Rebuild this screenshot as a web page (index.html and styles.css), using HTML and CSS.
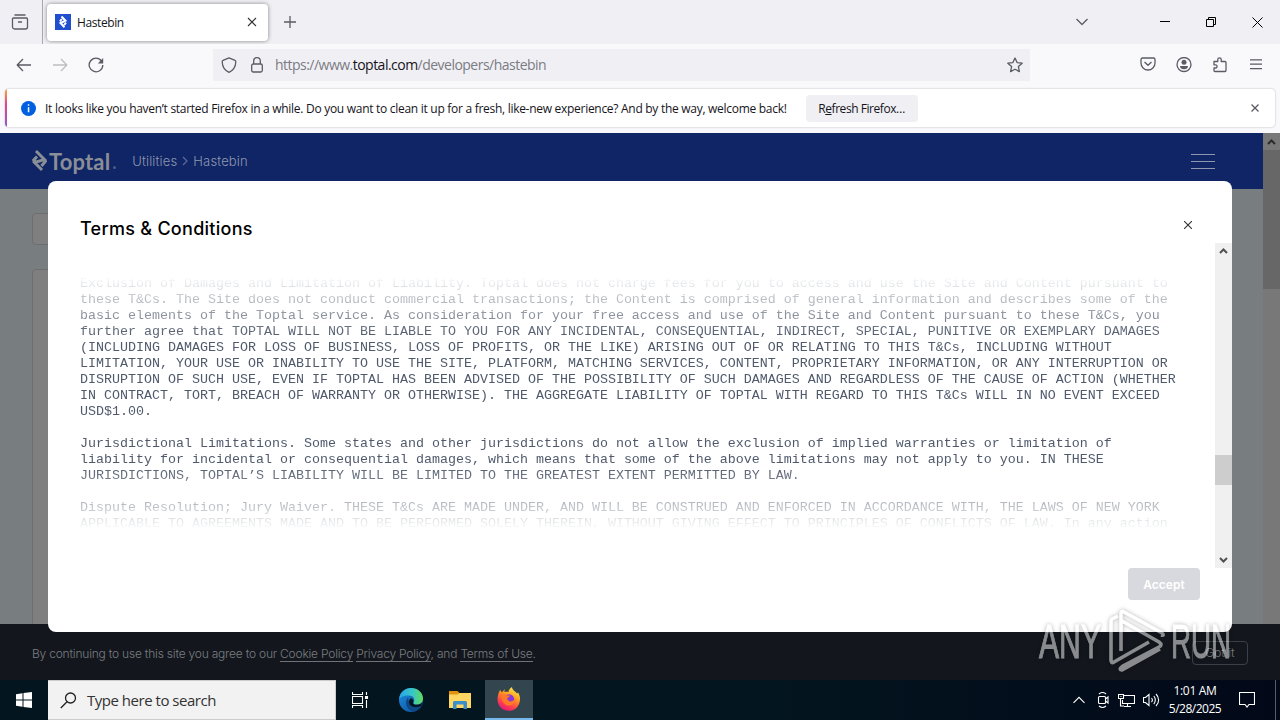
FILE: index.html
```html
<!DOCTYPE html>
<html lang="en">

<head>
    <meta charset="UTF-8">
    <meta name="viewport" content="width=device-width, initial-scale=1.0">
    <title>Hastebin</title>
    <link rel="stylesheet" href="styles.css">
</head>

<body>
    <div class="desktop">
        <!-- tabs -->
        <div class="tabbar">
            <div class="tab-view">
                <svg width="18" height="18" viewBox="0 0 18 18" class="line"><path d="M3.500 2h11M2.500 5h13a1 1 0 0 1 1 1v8a2 2 0 0 1-2 2h-11a2 2 0 0 1-2-2V6a1 1 0 0 1 1-1zM7 9h4"/></svg>
            </div>
            <div class="tab">
                <svg width="16" height="16" viewBox="0 0 16 16"><path fill="#204ecf" d="M0 0h16v16H0z"/><path fill="none" stroke="#fff" stroke-width="2" d="M6.500 2.500l4 4.200-5 2.300 4 4.300M6.800 5L5 7.300M9.200 11l1.800-2.300"/></svg>
                <span class="tab-title">Hastebin</span>
                <svg width="10" height="10" viewBox="0 0 10 10" class="line dark"><path d="M1 1l8 8M9 1L1 9"/></svg>
            </div>
            <svg width="12" height="12" viewBox="0 0 12 12" class="line plus"><path d="M6 0v12M0 6h12"/></svg>
            <div class="window-buttons">
                <svg width="12" height="8" viewBox="0 0 12 8" class="line"><path d="M.5 1L6 6.500 11.500 1"/></svg>
                <svg width="10" height="10" viewBox="0 0 10 10" class="line black"><path d="M0 4.500h10"/></svg>
                <svg width="10" height="10" viewBox="0 0 10 10" class="line black"><path d="M.5 2.500h7v7h-7zM2.500 2.500v-2h7v7h-2"/></svg>
                <svg width="11" height="11" viewBox="0 0 11 11" class="line black"><path d="M.5.500l10 10M10.500.500l-10 10"/></svg>
            </div>
        </div>

        <!-- address bar -->
        <div class="navbar">
            <div class="nav-buttons">
                <svg width="16" height="16" viewBox="0 0 16 16" class="line"><path d="M15 8H1.500M7 2L1.200 8 7 14"/></svg>
                <svg width="16" height="16" viewBox="0 0 16 16" class="line off"><path d="M1 8h13.500M9 2l5.800 6L9 14"/></svg>
                <svg width="16" height="16" viewBox="0 0 16 16" class="line"><path d="M13.500 4A6.800 6.800 0 1 0 14.800 8"/><path class="solid" d="M15.200 1v5.500H9.800z"/></svg>
            </div>
            <div class="urlbar">
                <svg width="16" height="16" viewBox="0 0 16 16" class="line"><path d="M8 .8l6 2.500c.8.300.8 1 .8 1.700-.2 5-2.800 8.500-6.800 10.300C4 13.500 1.400 10 1.200 5c0-.7 0-1.400.8-1.700z"/></svg>
                <svg width="12" height="16" viewBox="0 0 12 16" class="line"><rect x=".7" y="7" width="10.600" height="8" rx="1.500"/><path d="M2.700 7V4a3.300 3.300 0 0 1 6.600 0v3"/></svg>
                <div class="url">https://www.<b>toptal.com</b>/developers/hastebin</div>
                <svg width="16" height="16" viewBox="0 0 16 16" class="line"><path d="M8 1l2.100 4.600 5.100.6-3.800 3.400 1 5L8 12.200 3.600 14.600l1-5L.8 6.200l5.100-.6z"/></svg>
            </div>
            <div class="nav-tools">
                <svg width="16" height="16" viewBox="0 0 16 16" class="line"><path d="M2.500 1h11A1.500 1.500 0 0 1 15 2.500V6A7 7 0 0 1 1 6V2.500A1.500 1.500 0 0 1 2.500 1zM4.500 5L8 8.300 11.500 5"/></svg>
                <svg width="16" height="16" viewBox="0 0 16 16" class="line"><circle cx="8" cy="7.500" r="7"/><circle cx="8" cy="5.300" r="2.500" class="solid"/><path class="solid" d="M4 9h8c0 2-1.500 3.300-4 3.300S4 11 4 9z"/></svg>
                <svg width="16" height="16" viewBox="0 0 16 16" class="line"><path d="M2 4.500h3.800v-2a1.700 1.700 0 0 1 3.400 0v2H13a1 1 0 0 1 1 1v8a1 1 0 0 1-1 1H3a1 1 0 0 1-1-1V11h1.500a1.600 1.600 0 0 0 0-3.200H2z"/></svg>
                <svg width="12" height="12" viewBox="0 0 12 12" class="line"><path d="M0 .8h12M0 5.200h12M0 9.700h12"/></svg>
            </div>
        </div>

        <!-- refresh message -->
        <div class="notice-wrap">
            <div class="notice">
                <svg width="15" height="15" viewBox="0 0 15 15"><circle cx="7.500" cy="7.500" r="7.500" fill="#0060df"/><path fill="#fff" d="M6.800 3.300h1.500v1.500H6.800zM6.800 6.200h1.500v5H6.800z"/></svg>
                <span class="notice-text">It looks like you haven’t started Firefox in a while. Do you want to clean it up for a fresh, like-new experience? And by the way, welcome back!</span>
                <div class="refresh">R<u>e</u>fresh Firefox…</div>
                <svg width="8" height="8" viewBox="0 0 8 8" class="line"><path d="M.5.500l7 7M7.500.500l-7 7"/></svg>
            </div>
        </div>

        <!-- page -->
        <div class="viewport">
            <div class="page">
                <div class="header">
                    <svg width="15" height="24" viewBox="0 0 15 24" class="logo-mark"><path d="M4 2l8.500 8.500-10 3L10 21M5 7.500L1.800 11l3 3M9.500 17l3.800-4.500-3-3"/></svg>
                    <span class="logo">Toptal</span><span class="logo-dot"></span>
                    <span class="crumb">Utilities</span>
                    <svg width="6" height="10" viewBox="0 0 6 10" class="crumb-arrow"><path d="M1 1l4 4-4 4"/></svg>
                    <span class="crumb">Hastebin</span>
                    <svg width="24" height="16" viewBox="0 0 24 16" class="burger"><path d="M0 1.500h24M0 8.500h24M0 15.500h24"/></svg>
                </div>
                <div class="main">
                    <div class="box small"></div>
                    <div class="box editor"></div>
                </div>
            </div>
            <div class="page-scroll">
                <svg width="9" height="6" viewBox="0 0 9 6"><path d="M1 5l3.500-3.500L8 5"/></svg>
                <div class="page-thumb"></div>
            </div>

            <div class="cookies">
                <div class="cookies-text">By continuing to use this site you agree to our <span>Cookie Policy</span> <span>Privacy Policy</span>, and <span>Terms of Use</span>.</div>
                <div class="got-it">Got it</div>
            </div>

            <div class="modal">
                <div class="modal-head">
                    <div class="modal-title">Terms &amp; Conditions</div>
                    <svg width="8" height="8" viewBox="0 0 8 8" class="line dark"><path d="M0 0l8 8M8 0L0 8"/></svg>
                </div>
                <div class="modal-body">
                    <pre class="terms">Exclusion of Damages and Limitation of Liability. Toptal does not charge fees for you to access and use the Site and Content pursuant to
these T&amp;Cs. The Site does not conduct commercial transactions; the Content is comprised of general information and describes some of the
basic elements of the Toptal service. As consideration for your free access and use of the Site and Content pursuant to these T&amp;Cs, you
further agree that TOPTAL WILL NOT BE LIABLE TO YOU FOR ANY INCIDENTAL, CONSEQUENTIAL, INDIRECT, SPECIAL, PUNITIVE OR EXEMPLARY DAMAGES
(INCLUDING DAMAGES FOR LOSS OF BUSINESS, LOSS OF PROFITS, OR THE LIKE) ARISING OUT OF OR RELATING TO THIS T&amp;Cs, INCLUDING WITHOUT
LIMITATION, YOUR USE OR INABILITY TO USE THE SITE, PLATFORM, MATCHING SERVICES, CONTENT, PROPRIETARY INFORMATION, OR ANY INTERRUPTION OR
DISRUPTION OF SUCH USE, EVEN IF TOPTAL HAS BEEN ADVISED OF THE POSSIBILITY OF SUCH DAMAGES AND REGARDLESS OF THE CAUSE OF ACTION (WHETHER
IN CONTRACT, TORT, BREACH OF WARRANTY OR OTHERWISE). THE AGGREGATE LIABILITY OF TOPTAL WITH REGARD TO THIS T&amp;Cs WILL IN NO EVENT EXCEED
USD$1.00.

Jurisdictional Limitations. Some states and other jurisdictions do not allow the exclusion of implied warranties or limitation of
liability for incidental or consequential damages, which means that some of the above limitations may not apply to you. IN THESE
JURISDICTIONS, TOPTAL’S LIABILITY WILL BE LIMITED TO THE GREATEST EXTENT PERMITTED BY LAW.

Dispute Resolution; Jury Waiver. THESE T&amp;Cs ARE MADE UNDER, AND WILL BE CONSTRUED AND ENFORCED IN ACCORDANCE WITH, THE LAWS OF NEW YORK
APPLICABLE TO AGREEMENTS MADE AND TO BE PERFORMED SOLELY THEREIN, WITHOUT GIVING EFFECT TO PRINCIPLES OF CONFLICTS OF LAW. In any action</pre>
                    <div class="scroll">
                        <svg width="9" height="6" viewBox="0 0 9 6"><path d="M1 5l3.500-3.500L8 5"/></svg>
                        <div class="thumb"></div>
                        <svg width="9" height="6" viewBox="0 0 9 6"><path d="M1 1l3.500 3.500L8 1"/></svg>
                    </div>
                </div>
                <div class="modal-foot">
                    <div class="accept">Accept</div>
                </div>
            </div>
        </div>

        <!-- taskbar -->
        <div class="taskbar">
            <div class="start">
                <svg width="16" height="16" viewBox="0 0 16 16"><path fill="#fff" d="M0 2.200l6.500-.9v6.200H0zM7.500 1.100L16 0v7.500H7.500zM0 8.500h6.500v6.200L0 13.800zM7.500 8.500H16V16l-8.500-1.100z"/></svg>
            </div>
            <div class="search">
                <svg width="17" height="17" viewBox="0 0 17 17"><circle cx="10.500" cy="6" r="5"/><path d="M7 9.700L.8 16"/></svg>
                <span>Type here to search</span>
            </div>
            <div class="task">
                <svg width="17" height="16" viewBox="0 0 17 16" class="white"><path d="M.5 0v2.500h10V0M.5 16v-2.500h10V16M.5 4.500h10v7H.5zM14.500 0v3M14.500 8v8"/><path fill="#fff" d="M13.500 4.500h2v2h-2z"/></svg>
            </div>
            <div class="task edge">
                <svg width="24" height="24" viewBox="0 0 24 24">
                    <defs>
                        <linearGradient id="edgeTop" x1="0" y1="0.500" x2="1" y2="0.500"><stop offset="0" stop-color="#2aa6e8"/><stop offset=".55" stop-color="#36c6c8"/><stop offset="1" stop-color="#62dc58"/></linearGradient>
                        <linearGradient id="edgeLow" x1="0" y1="0" x2="1" y2="1"><stop offset="0" stop-color="#1b8fe0"/><stop offset="1" stop-color="#114a93"/></linearGradient>
                    </defs>
                    <circle cx="12" cy="12" r="12" fill="url(#edgeLow)"/>
                    <path fill="url(#edgeTop)" d="M.2 11C1 4 6 0 12 0c7 0 12 5 12 10.500 0 4-3 6-6 6-2.500 0-4-1-3.800-1.800C16 13 16 8 10.500 7.500 5 7 1 9.500.2 11z"/>
                    <path fill="#0c4788" d="M9 9.500C4.500 15 8 22.500 15 23.600c3-.8 5.500-3 7-5.200-6 2.800-12.500 1-12-4.500z"/>
                    <path fill="#03151f" d="M11.800 10.200c2 .3 3.400 2.500 2.400 4.500-.5 1.300 1.500 2.200 4 2 2.300-.2 4-1 5-2.500-.3 1.800-.8 3-1.500 4-5 2.500-12 .8-11.700-4.500.1-1.500.8-2.600 1.800-3.500z"/>
                </svg>
            </div>
            <div class="task folder">
                <svg width="22" height="18" viewBox="0 0 22 18"><path fill="#e2920c" d="M0 0h8.500l2 2H22v4H0z"/><path fill="#ffd762" d="M0 3.500h8.500L10.500 2H22v15H0z"/><path fill="#3a8ec9" d="M4 18v-6.500a1.500 1.500 0 0 1 1.500-1.500h11a1.500 1.500 0 0 1 1.500 1.500V18h-3.500v-4.500h-7V18z"/></svg>
            </div>
            <div class="task open">
                <svg width="24" height="24" viewBox="0 0 24 24">
                    <defs>
                        <linearGradient id="fox" x1=".8" y1="0" x2=".3" y2="1"><stop offset="0" stop-color="#fff44f"/><stop offset=".4" stop-color="#ff9a1f"/><stop offset=".75" stop-color="#ff3c50"/><stop offset="1" stop-color="#e3167c"/></linearGradient>
                    </defs>
                    <path fill="url(#fox)" d="M1.500 6.500C2 4 3.500 3 3.500 3l.8 2L6 4.500 7.500 2v3c1.500-.5 3-.3 4 0C11.500 3 13 1 15 0c0 3 3.500 4.500 5 6.500l1-1c2.500 3.500 2.500 8 1 11.500a11.200 11.200 0 0 1-20.800-.5C0 13 .5 9.500 1.500 6.500z"/>
                    <circle cx="12" cy="12.500" r="5.200" fill="#8a38d8"/>
                    <path fill="#ff7a26" d="M4.500 8c2-1.500 4-.8 5.500.5h3c0 1.500-2.500 2-3 2.800 1 3.500 4.500 4.200 7.500 1.200.5 4-3 6.500-6.500 6S4 14 4.500 8z"/>
                </svg>
            </div>
            <div class="tray">
                <svg width="12" height="8" viewBox="0 0 12 8" class="white"><path d="M.5 6.800L6 1.300l5.500 5.500"/></svg>
                <svg width="13" height="16" viewBox="0 0 13 16" class="white"><rect x="1.500" y="4.500" width="7" height="7" rx="1"/><path d="M8.500 7l2.500-2v6L8.500 9M2 2c2-1.700 5-1.700 7 0M2 14c2 1.700 5 1.700 7 0"/></svg>
                <svg width="17" height="15" viewBox="0 0 17 15" class="white"><path d="M6 2.500h10.500v8H4.500V7M9.500 10.500v3M6 13.500h7M.5 1.500h5v4h-5zM2.500 5.500v7.500H6M2.500 3.500h1"/></svg>
                <svg width="17" height="14" viewBox="0 0 17 14" class="white"><path d="M.5 4.500h2L6 1.500v11l-3.500-3h-2zM8.500 5c1 1.200 1 3 0 4M10.800 3c2 2.200 2 6 0 8M13 1c3.500 3.500 3.500 8.500 0 12"/></svg>
                <div class="clock">
                    <div class="time">1:01 AM</div>
                    <div class="date">5/28/2025</div>
                </div>
                <svg width="16" height="16" viewBox="0 0 16 16" class="white"><path d="M.5.500h15v12H10L8 15l-2-2.500H.5z"/></svg>
                <div class="show-desktop"></div>
            </div>
        </div>
    </div>

    <svg class="watermark" width="210" height="70" viewBox="0 0 210 70">
        <text x="4" y="54" textLength="62" lengthAdjust="spacingAndGlyphs">ANY</text>
        <path d="M83 12l-5 2.500q-2 1-2 3V56q0 4 3 2l35-20M86 47V10q0-4 3-2l38 21q3 3-1 2M87 17l37 21q4 3 0 5L88 62q-5 4-1 4l38-21"/>
        <text x="136" y="54" textLength="60" lengthAdjust="spacingAndGlyphs">RUN</text>
    </svg>
</body>

</html>
```
FILE: styles.css
```css
* {
    box-sizing: border-box;
}

body {
    margin: 0;
    overflow: hidden;
    font-family: "Open Sans", "Noto Sans", sans-serif;
    font-size: 12px;
    color: #15141a;
}

svg {
    flex: none;
    display: block;
}

.desktop {
    width: 1280px;
    height: 720px;
    display: flex;
    flex-direction: column;
    white-space: nowrap;
}

.line {
    fill: none;
    stroke: #5b5b66;
    stroke-width: 1.3;
    stroke-linejoin: round;
}

.line.dark {
    stroke: #333;
    stroke-width: 1.1;
}

.line.black {
    stroke: #000;
    stroke-width: 1;
}

.line.off {
    stroke: #bdbdc3;
}

.line .solid {
    fill: #5b5b66;
    stroke: none;
}

.white {
    fill: none;
    stroke: #fff;
    stroke-width: 1.1;
}

/* tabs */
.tabbar {
    height: 44px;
    display: flex;
    align-items: center;
    background: #f0f0f4;
}

.tab-view {
    width: 43px;
    height: 44px;
    padding: 13px 0 0 11px;
    border-right: 1px solid #a9a9b0;
}

.tab {
    width: 221px;
    height: 37px;
    margin-left: 4px;
    padding: 0 11px 0 8px;
    display: flex;
    align-items: center;
    background: #fff;
    border-radius: 4px;
    box-shadow: 0 0 4px rgba(0, 0, 0, .45);
}

.tab-title {
    flex: 1;
    margin-left: 6px;
    letter-spacing: -.4px;
}

.plus {
    margin-left: 16px;
}

.window-buttons {
    margin-left: auto;
    padding-right: 17px;
    display: flex;
    align-items: center;
}

.window-buttons svg + svg {
    margin-left: 36px;
}

.window-buttons svg:nth-child(2) {
    margin-left: 72px;
}

/* address bar */
.navbar {
    height: 44px;
    padding: 0 18px 3px 16px;
    display: flex;
    align-items: center;
    background: #f9f9fb;
}

.nav-buttons {
    width: 197px;
    display: flex;
    gap: 20px;
}

.urlbar {
    width: 817px;
    height: 32px;
    padding: 0 7px 0 8px;
    display: flex;
    align-items: center;
    background: #f0f0f4;
}

.urlbar svg:nth-child(2) {
    margin-left: 14px;
}

.url {
    flex: 1;
    margin-left: 12px;
    font-size: 14px;
    letter-spacing: -.52px;
    color: #7b7b84;
}

.url b {
    font-weight: 400;
    color: #15141a;
}

.nav-tools {
    margin-left: auto;
    display: flex;
    align-items: center;
    gap: 20px;
}

.nav-tools svg:last-child {
    margin-left: 2px;
}

/* refresh message */
.notice-wrap {
    height: 45px;
    padding: 1px 5px 6px;
    background: #f9f9fb;
}

.notice {
    height: 38px;
    padding: 0 16px 0 14px;
    display: flex;
    align-items: center;
    background: linear-gradient(#ffa436, #e0458b 40%, #9059d0) left / 2px 100% no-repeat #fff;
    border-radius: 4px;
    box-shadow: 0 0 2px rgba(0, 0, 0, .3);
}

.notice svg:first-child {
    margin-left: 2px;
}

.notice-text {
    margin-left: 9px;
    letter-spacing: -.285px;
}

.refresh {
    width: 112px;
    height: 27px;
    margin: 0 auto 0 19px;
    line-height: 28px;
    text-align: center;
    letter-spacing: -.45px;
    background: #f0f0f4;
    border-radius: 4px;
}

/* page */
.viewport {
    position: relative;
    height: 547px;
    display: flex;
    overflow: hidden;
}

.page {
    flex: 1;
    background: #787d80;
}

.header {
    height: 56px;
    padding: 0 48px 0 32px;
    display: flex;
    align-items: center;
    background: #0f2566;
    color: #8f97ae;
    font-family: Inter, sans-serif;
    font-size: 13px;
}

.logo-mark {
    fill: none;
    stroke: #8a8e96;
    stroke-width: 3;
}

.logo {
    margin-left: 2px;
    font-family: Lato, sans-serif;
    font-size: 22px;
    font-weight: 700;
    letter-spacing: .15px;
    color: #8a8e96;
}

.logo-dot {
    width: 3px;
    height: 3px;
    margin: 12px 16px 0 3px;
    border-radius: 50%;
    background: #4b5a85;
}

.crumb {
    font-weight: 300;
    letter-spacing: .15px;
}

.crumb-arrow {
    margin: 0 5px 0 5px;
    fill: none;
    stroke: #5c6b98;
    stroke-width: 1.2;
}

.burger {
    margin-left: auto;
    stroke: #8f97ae;
    stroke-width: 1;
}

.main {
    padding: 24px 48px 0 32px;
}

.box {
    background: #7f7f7f;
    border: 1px solid #6c6e71;
    border-radius: 4px;
}

.small {
    height: 32px;
    width: 600px;
}

.editor {
    height: 400px;
    margin-top: 24px;
}

.page-scroll {
    width: 17px;
    padding-top: 6px;
    background: #787878;
}

.page-scroll svg {
    margin: 0 auto;
    fill: none;
    stroke: #2c2c2c;
    stroke-width: 2;
}

.page-thumb {
    height: 139px;
    margin-top: 5px;
    background: #676767;
}

.cookies {
    position: absolute;
    left: 0;
    right: 0;
    bottom: 0;
    height: 56px;
    padding: 2px 32px 0;
    display: flex;
    align-items: center;
    justify-content: space-between;
    background: #13171d;
    color: #7a7d81;
    font-family: Inter, sans-serif;
    font-size: 12px;
    font-weight: 300;
}

.cookies-text {
    letter-spacing: -.21px;
}

.cookies-text span {
    border-bottom: 1px solid #6f7276;
}

.got-it {
    width: 56px;
    height: 24px;
    line-height: 22px;
    text-align: center;
    border: 1px solid #3c3f44;
    border-radius: 4px;
}

/* terms dialog */
.modal {
    position: absolute;
    left: 48px;
    top: 48px;
    width: 1184px;
    height: 451px;
    display: flex;
    flex-direction: column;
    background: #fff;
    border-radius: 8px;
}

.modal-head {
    height: 62px;
    padding: 26px 40px 0 32px;
    display: flex;
    justify-content: space-between;
}

.modal-head svg {
    margin-top: 14px;
}

.modal-title {
    line-height: 43px;
    font-family: Inter, sans-serif;
    font-size: 18px;
    font-weight: 500;
    letter-spacing: .28px;
    color: #000;
}

.modal-body {
    height: 325px;
    padding-left: 32px;
    display: flex;
    justify-content: space-between;
}

.terms {
    height: 254px;
    margin: 33px 0 0;
    overflow: hidden;
    font: 13.333px/16px "Liberation Mono", monospace;
    color: #505a6c;
    -webkit-mask-image: linear-gradient(transparent, #000 60px, #000 190px, transparent);
    mask-image: linear-gradient(transparent, #000 60px, #000 190px, transparent);
}

.scroll {
    width: 17px;
    padding: 5px 0;
    display: flex;
    flex-direction: column;
    align-items: center;
    background: #f0f0f0;
}

.scroll svg {
    fill: none;
    stroke: #505050;
    stroke-width: 2;
}

.thumb {
    width: 17px;
    height: 30px;
    margin: 201px 0 auto;
    background: #cdcdcd;
}

.modal-foot {
    display: flex;
    justify-content: flex-end;
    padding-right: 32px;
}

.accept {
    width: 72px;
    height: 32px;
    line-height: 33px;
    text-align: center;
    background: #d8d9de;
    border-radius: 4px;
    color: #fff;
    font-family: Inter, sans-serif;
    font-size: 12px;
    font-weight: 600;
}

/* taskbar */
.taskbar {
    height: 40px;
    display: flex;
    background: linear-gradient(90deg, #03151f, #03151f 60%, #020818);
    color: #fff;
}

.start {
    width: 48px;
    display: flex;
    align-items: center;
    justify-content: center;
}

.search {
    width: 288px;
    padding-left: 12px;
    display: flex;
    align-items: center;
    gap: 10px;
    background: #f2f2f2;
    border: 1px solid #ccc;
    border-left: 0;
    color: #333;
    font-size: 15px;
    letter-spacing: -.48px;
}

.search svg {
    fill: none;
    stroke: #222;
    stroke-width: 1.3;
}

.task {
    width: 48px;
    display: flex;
    align-items: center;
    justify-content: center;
}

.task.edge {
    width: 54px;
}

.task.folder {
    width: 44px;
    margin-right: 3px;
}

.task.open {
    background: #33454f;
    border-bottom: 2px solid #76b9ed;
}

.tray {
    margin-left: auto;
    display: flex;
    align-items: center;
}

.tray svg {
    margin-right: 8px;
}

.tray svg:first-child {
    margin-right: 12px;
}

.clock {
    width: 72px;
    line-height: 18px;
    text-align: center;
    letter-spacing: -.5px;
}

.tray .clock {
    margin-left: -9px;
}

.time {
    letter-spacing: -.3px;
}

.tray .clock + svg {
    margin: 0 20px 0 8px;
}

.show-desktop {
    width: 5px;
    height: 40px;
    border-left: 1px solid #56606c;
}

.watermark {
    position: absolute;
    left: 1035px;
    top: 604px;
    opacity: .5;
    fill: none;
    stroke: #fff;
    stroke-width: 3.6;
    filter: drop-shadow(0 0 2px rgba(0, 0, 0, .6));
}

.watermark text {
    fill: #fff;
    stroke: #fff;
    stroke-width: 1;
    font-family: "Liberation Sans", sans-serif;
    font-size: 49px;
}
```
